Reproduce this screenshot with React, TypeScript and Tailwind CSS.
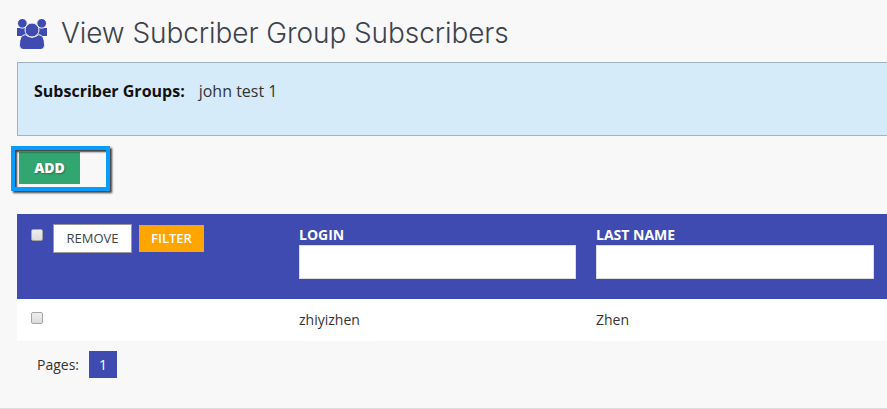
import React from 'react';

const COLUMNS = [
  { label: 'LOGIN', value: 'zhiyizhen', width: 'w-[277px]' },
  { label: 'LAST NAME', value: 'Zhen', width: 'w-[278px]' },
];

const UsersIcon: React.FC = () => (
  <svg className="w-[30px] h-[30px] mt-[19px] shrink-0" viewBox="0 0 90 90" fill="#404bb1" stroke="#f8f8f8" strokeWidth="3">
    <path stroke="none" d="M0 27H32V51H0Z M58 27H90V51H58Z" />
    <circle cx="16" cy="13" r="14.5" />
    <circle cx="74" cy="13" r="14.5" />
    <path d="M7.5 76Q7.5 48 25 47Q45 62 65 47Q82.5 48 82.5 76V80Q82.5 91.5 71 91.5H19Q7.5 91.5 7.5 80Z" />
    <circle cx="45" cy="33" r="21" />
  </svg>
);

const Checkbox: React.FC = () => (
  <input
    type="checkbox"
    className="block appearance-none w-3 h-3 shrink-0 rounded-[2px] border border-[#a5a5a5] bg-gradient-to-b from-[#eeeeee] to-[#dcdcdc]"
  />
);

export default function App() {
  return (
    <div className="h-[409px] overflow-hidden bg-[#f8f8f8] border-b border-[#dedede] pl-[17px] font-['Open_Sans',sans-serif] text-sm text-[#333]">
      <div className="flex h-[62px]">
        <UsersIcon />
        <h1 className="ml-[14px] mt-[13px] whitespace-nowrap font-['Inter',sans-serif] font-light text-[28px] leading-[40px] tracking-[-0.08px] text-[#3d434d]">
          View Subcriber Group Subscribers
        </h1>
      </div>

      {/* Group summary */}
      <div className="h-[74px] border border-r-0 border-[#9fb4c0] bg-[#d6ebf9] pl-4 pt-[17px] text-base leading-[22px]">
        <span className="font-bold text-[#111]">Subscriber Groups:</span>
        <span className="ml-[14px]">john test 1</span>
      </div>

      {/* Highlighted action */}
      <div className="h-[78px] pt-[10px]">
        <div className="relative -ml-[6px] w-[99px] h-[45px] border-4 border-[#0a9bff] shadow-[2px_2px_2px_rgba(0,0,0,0.75)]">
          <button className="block ml-1 mt-[2px] w-[61px] h-8 bg-[#32a671] text-sm font-extrabold text-white [text-shadow:1px_1px_2px_rgba(0,0,0,0.3)]">
            ADD
          </button>
          <div className="absolute inset-0 shadow-[inset_2px_2px_2px_rgba(0,0,0,0.75)]"></div>
        </div>
      </div>

      <div className="grid grid-cols-[268px_297px_1fr] h-[85px] bg-[#404bb1] pl-[14px] text-white">
        <div className="flex pt-[10px]">
          <div className="pt-[5px]">
            <Checkbox />
          </div>
          <button className="ml-[10px] w-[79px] h-[29px] border border-[#999] bg-white text-[13px] font-medium text-[#3d434d]">
            REMOVE
          </button>
          <button className="ml-[7px] mt-px w-[65px] h-[27px] bg-[#ffa500] text-[13px] font-semibold">
            FILTER
          </button>
        </div>
        {COLUMNS.map((column) => (
          <label key={column.label} className="pt-[11px] text-sm leading-5 font-bold">
            <span className="block">{column.label}</span>
            <input type="text" className={`block h-[34px] border border-[#ddd] bg-white ${column.width}`} />
          </label>
        ))}
      </div>

      <div className="grid grid-cols-[268px_297px_1fr] items-center h-[42px] bg-white pl-[14px]">
        <div className="pb-1">
          <Checkbox />
        </div>
        {COLUMNS.map((column) => (
          <span key={column.label}>{column.value}</span>
        ))}
      </div>

      <div className="flex pl-5 pt-[10px] leading-[27px]">
        <span>Pages:</span>
        <span className="ml-[10px] w-7 h-[27px] bg-[#404bb1] text-center text-white">1</span>
      </div>
    </div>
  );
}
